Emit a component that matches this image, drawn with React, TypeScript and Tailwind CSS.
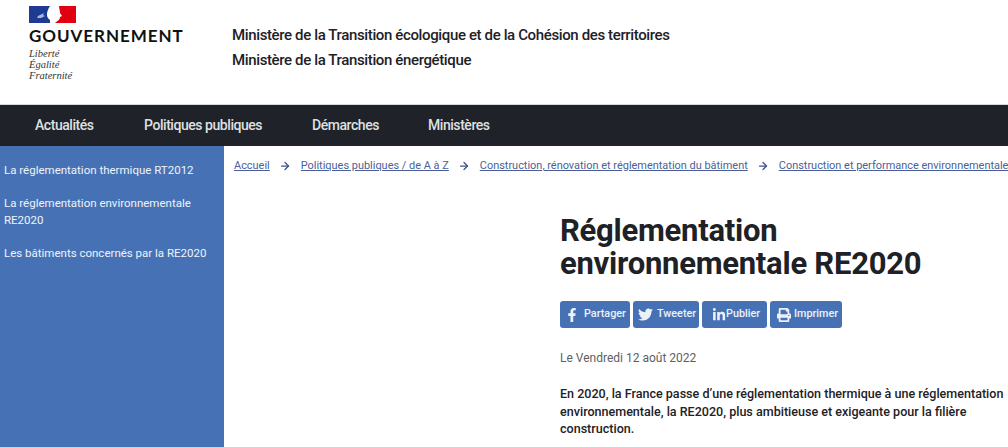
import React from 'react';
import { ArrowRight } from 'lucide-react';
import { FaFacebookF, FaTwitter, FaLinkedinIn, FaPrint } from 'react-icons/fa';

const navItems = [
  { label: 'Actualités', className: 'w-[109px] ml-[35px]' },
  { label: 'Politiques publiques', className: 'w-[168px]' },
  { label: 'Démarches', className: 'w-[116px]' },
  { label: 'Ministères', className: '' },
];

const crumbs = [
  'Accueil',
  'Politiques publiques / de A à Z',
  'Construction, rénovation et réglementation du bâtiment',
  'Construction et performance environnementale',
];

function ShareButton({ icon, label, className, iconClass }: { icon: React.ReactNode; label: string; className: string; iconClass: string }) {
  return (
    <button type="button" className={`h-[27px] rounded-[3px] bg-[#4672b5] text-white/90 flex items-center text-[10.8px] font-medium ${className}`}>
      <span className={`flex w-[24px] shrink-0 ${iconClass}`}>{icon}</span>
      {label}
    </button>
  );
}

export default function App() {
  return (
    <div className="w-[1008px] h-[447px] overflow-hidden bg-white font-['Roboto',sans-serif]">
      <header className="h-[105px] flex border-b border-[#d9d9d9]">
        <div className="ml-[29px] w-[203px] pt-[6px]">
          <svg width="47" height="17" viewBox="0 0 47 17" className="block">
            <path d="M0 0H21C19 3 18 6 18 8C18 10 18 12 21 14V17H0Z" fill="#1f3a93" />
            <path d="M30 0H47V17H26C28 15 31 14 31 11L33 10 31 7C31 4 30 2 30 0Z" fill="#e1000f" />
            <path d="M9 10l6-3-1 2 2 1-4 2-4 0z" fill="#aab8dc" />
          </svg>
          <div className="mt-[3px] text-[17px] leading-[20px] font-bold tracking-[0.95px] text-[#111] font-['Lato',sans-serif]">GOUVERNEMENT</div>
          <div className="mt-[2px] text-[10.5px] leading-[11px] italic text-[#333] font-['Liberation_Serif',serif]">
            <div>Liberté</div>
            <div>Égalité</div>
            <div>Fraternité</div>
          </div>
        </div>
        <div className="pt-[23px] text-[15px] leading-[25px] font-medium tracking-[-0.37px] text-[#1e2126]">
          <div>Ministère de la Transition écologique et de la Cohésion des territoires</div>
          <div>Ministère de la Transition énergétique</div>
        </div>
      </header>

      <nav className="h-[41px] bg-[#1f2228] flex items-center text-[14px] font-medium tracking-[-0.45px] text-[#dfe0e2]">
        {navItems.map((item) => (
          <a key={item.label} className={item.className}>{item.label}</a>
        ))}
      </nav>

      <div className="flex">
        <aside className="w-[224px] h-[301px] shrink-0 bg-[#4672b5] pl-[4px] pt-[16px] text-[11.5px] leading-[17px] text-[#eef2f9]">
          <p className="mb-[16px]">La réglementation thermique RT2012</p>
          <p className="mb-[16px] pr-[20px]">La réglementation environnementale RE2020</p>
          <p>Les bâtiments concernés par la RE2020</p>
        </aside>

        <main className="flex-1 min-w-0">
          <div className="ml-[10px] mt-[13px] h-[14px] flex items-center whitespace-nowrap text-[10.95px] text-[#4a5f9a]">
            {crumbs.map((crumb, i) => (
              <React.Fragment key={crumb}>
                {i > 0 && <ArrowRight className="w-[12px] h-[12px] mx-[9.5px] text-[#3f5289] shrink-0" strokeWidth={2.5} />}
                <a className="underline">{crumb}</a>
              </React.Fragment>
            ))}
          </div>

          <div className="ml-[336px] mt-[41px]">
            <h1 className="text-[31px] leading-[33px] font-bold tracking-[-0.25px] text-[#1e2126]">
              Réglementation<br />environnementale RE2020
            </h1>
            <div className="mt-[21px] flex gap-[3px]">
              <ShareButton icon={<FaFacebookF size={14} />} label="Partager" className="w-[70px]" iconClass="justify-center" />
              <ShareButton icon={<FaTwitter size={15} />} label="Tweeter" className="w-[66px]" iconClass="justify-center" />
              <ShareButton icon={<FaLinkedinIn size={14} />} label="Publier" className="w-[65px]" iconClass="justify-end" />
              <ShareButton icon={<FaPrint size={14} />} label="Imprimer" className="w-[72px]" iconClass="justify-end pr-[3px]" />
            </div>
            <p className="mt-[22px] text-[12px] leading-[16px] text-[#5c5f63]">Le Vendredi 12 août 2022</p>
            <p className="mt-[19px] w-[450px] text-[12.55px] leading-[17.5px] font-medium text-[#1e2126]">
              En 2020, la France passe d’une réglementation thermique à une réglementation environnementale, la RE2020, plus ambitieuse et exigeante pour la filière construction.
            </p>
          </div>
        </main>
      </div>
    </div>
  );
}
